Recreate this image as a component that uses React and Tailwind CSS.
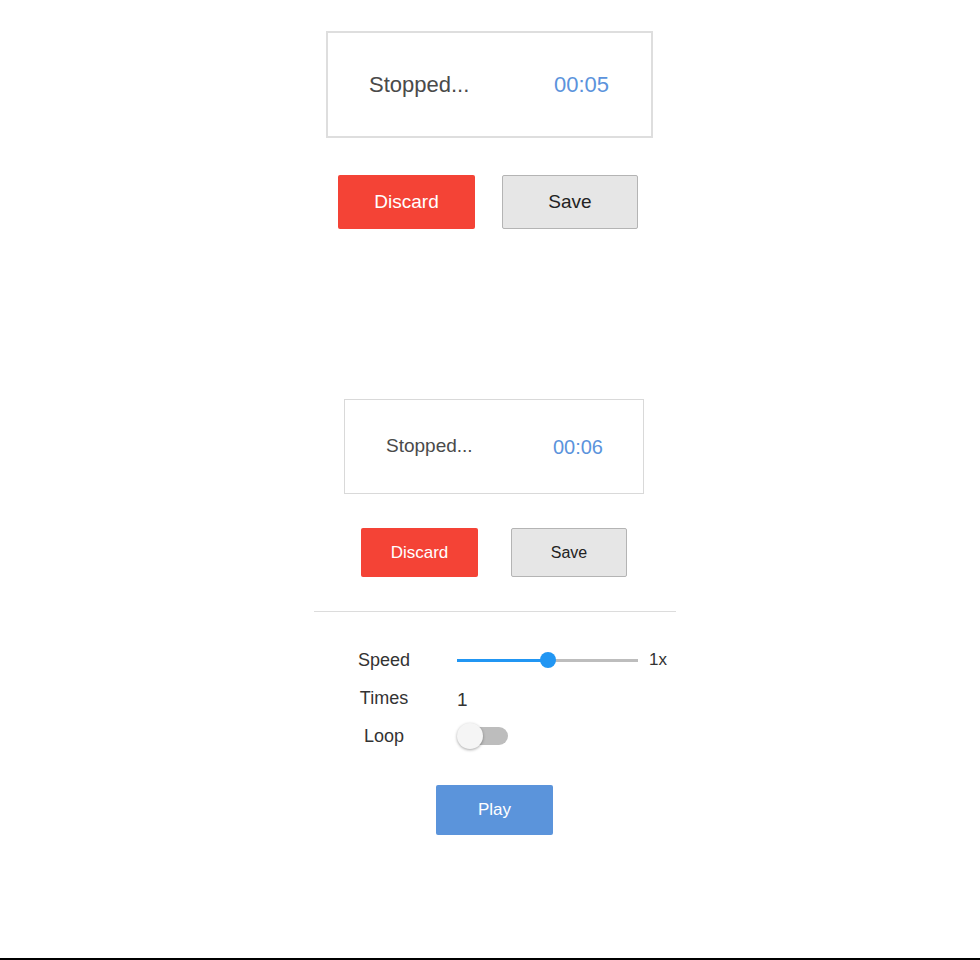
export default function App() {
  const font = { fontFamily: '"Liberation Sans", Arial, sans-serif' };
  return (
    <div className="w-[980px] h-[960px] flex flex-col bg-white" style={font}>
      {/* Recorder 1 */}
      <div className="mt-[31px] ml-[326px] w-[327px] h-[107px] border-2 border-[#dedede] flex items-center justify-between pl-[41px] pr-[42px]">
        <span className="text-[22px] text-[#4a4a4a]">Stopped...</span>
        <span className="text-[22px] text-[#5b93dc]">00:05</span>
      </div>
      <div className="mt-[37px] ml-[338px] flex gap-[27px]">
        <button className="w-[137px] h-[54px] rounded-[2px] bg-[#f44336] text-white text-[19px]">Discard</button>
        <button className="w-[136px] h-[54px] rounded-[2px] bg-[#e6e6e6] border border-[#b4b4b4] text-[#222] text-[19px]">Save</button>
      </div>

      {/* Recorder 2 */}
      <div className="mt-[170px] ml-[344px] w-[300px] h-[95px] border border-[#d9d9d9] flex items-center justify-between pl-[41px] pr-[40px]">
        <span className="text-[19px] text-[#4a4a4a]">Stopped...</span>
        <span className="text-[20px] text-[#5b93dc]">00:06</span>
      </div>
      <div className="mt-[34px] ml-[361px] flex gap-[33px]">
        <button className="w-[117px] h-[49px] rounded-[2px] bg-[#f44336] text-white text-[17px]">Discard</button>
        <button className="w-[116px] h-[49px] rounded-[2px] bg-[#e6e6e6] border border-[#b4b4b4] text-[#222] text-[16px]">Save</button>
      </div>
      <div className="mt-[34px] ml-[314px] w-[362px] h-px bg-[#dcdcdc]" />

      <div className="mt-[29px] ml-[344px] flex flex-col">
        <div className="h-[38px] flex items-center">
          <span className="w-[80px] text-center text-[18px] text-[#333]">Speed</span>
          <div className="ml-[33px] w-[181px] h-[16px] relative flex items-center">
            <div className="h-[3px] w-[91px] bg-[#2196f3]" />
            <div className="h-[3px] flex-1 bg-[#bdbdbd]" />
            <div className="absolute left-[83px] top-0 w-[16px] h-[16px] rounded-full bg-[#2196f3]" />
          </div>
          <span className="ml-[11px] text-[17px] text-[#333]">1x</span>
        </div>
        <div className="h-[38px] flex items-center">
          <span className="w-[80px] text-center text-[18px] text-[#333]">Times</span>
          <span className="ml-[33px] text-[19px] text-[#333] mt-[4px]">1</span>
        </div>
        <div className="h-[38px] flex items-center">
          <span className="w-[80px] text-center text-[18px] text-[#333]">Loop</span>
          <div className="ml-[33px] w-[52px] h-[26px] relative flex items-center">
            <div className="ml-[4px] w-[47px] h-[18px] rounded-full bg-[#bdbdbd]" />
            <div className="absolute left-0 top-0 w-[26px] h-[26px] rounded-full bg-[#f5f5f5] shadow-[0_1px_3px_rgba(0,0,0,0.35)]" />
          </div>
        </div>
      </div>

      <button className="mt-[30px] ml-[436px] w-[117px] h-[50px] rounded-[2px] bg-[#5b94db] text-white text-[17px]">Play</button>

      <div className="mt-auto h-[2px] w-full bg-black" />
    </div>
  );
}
